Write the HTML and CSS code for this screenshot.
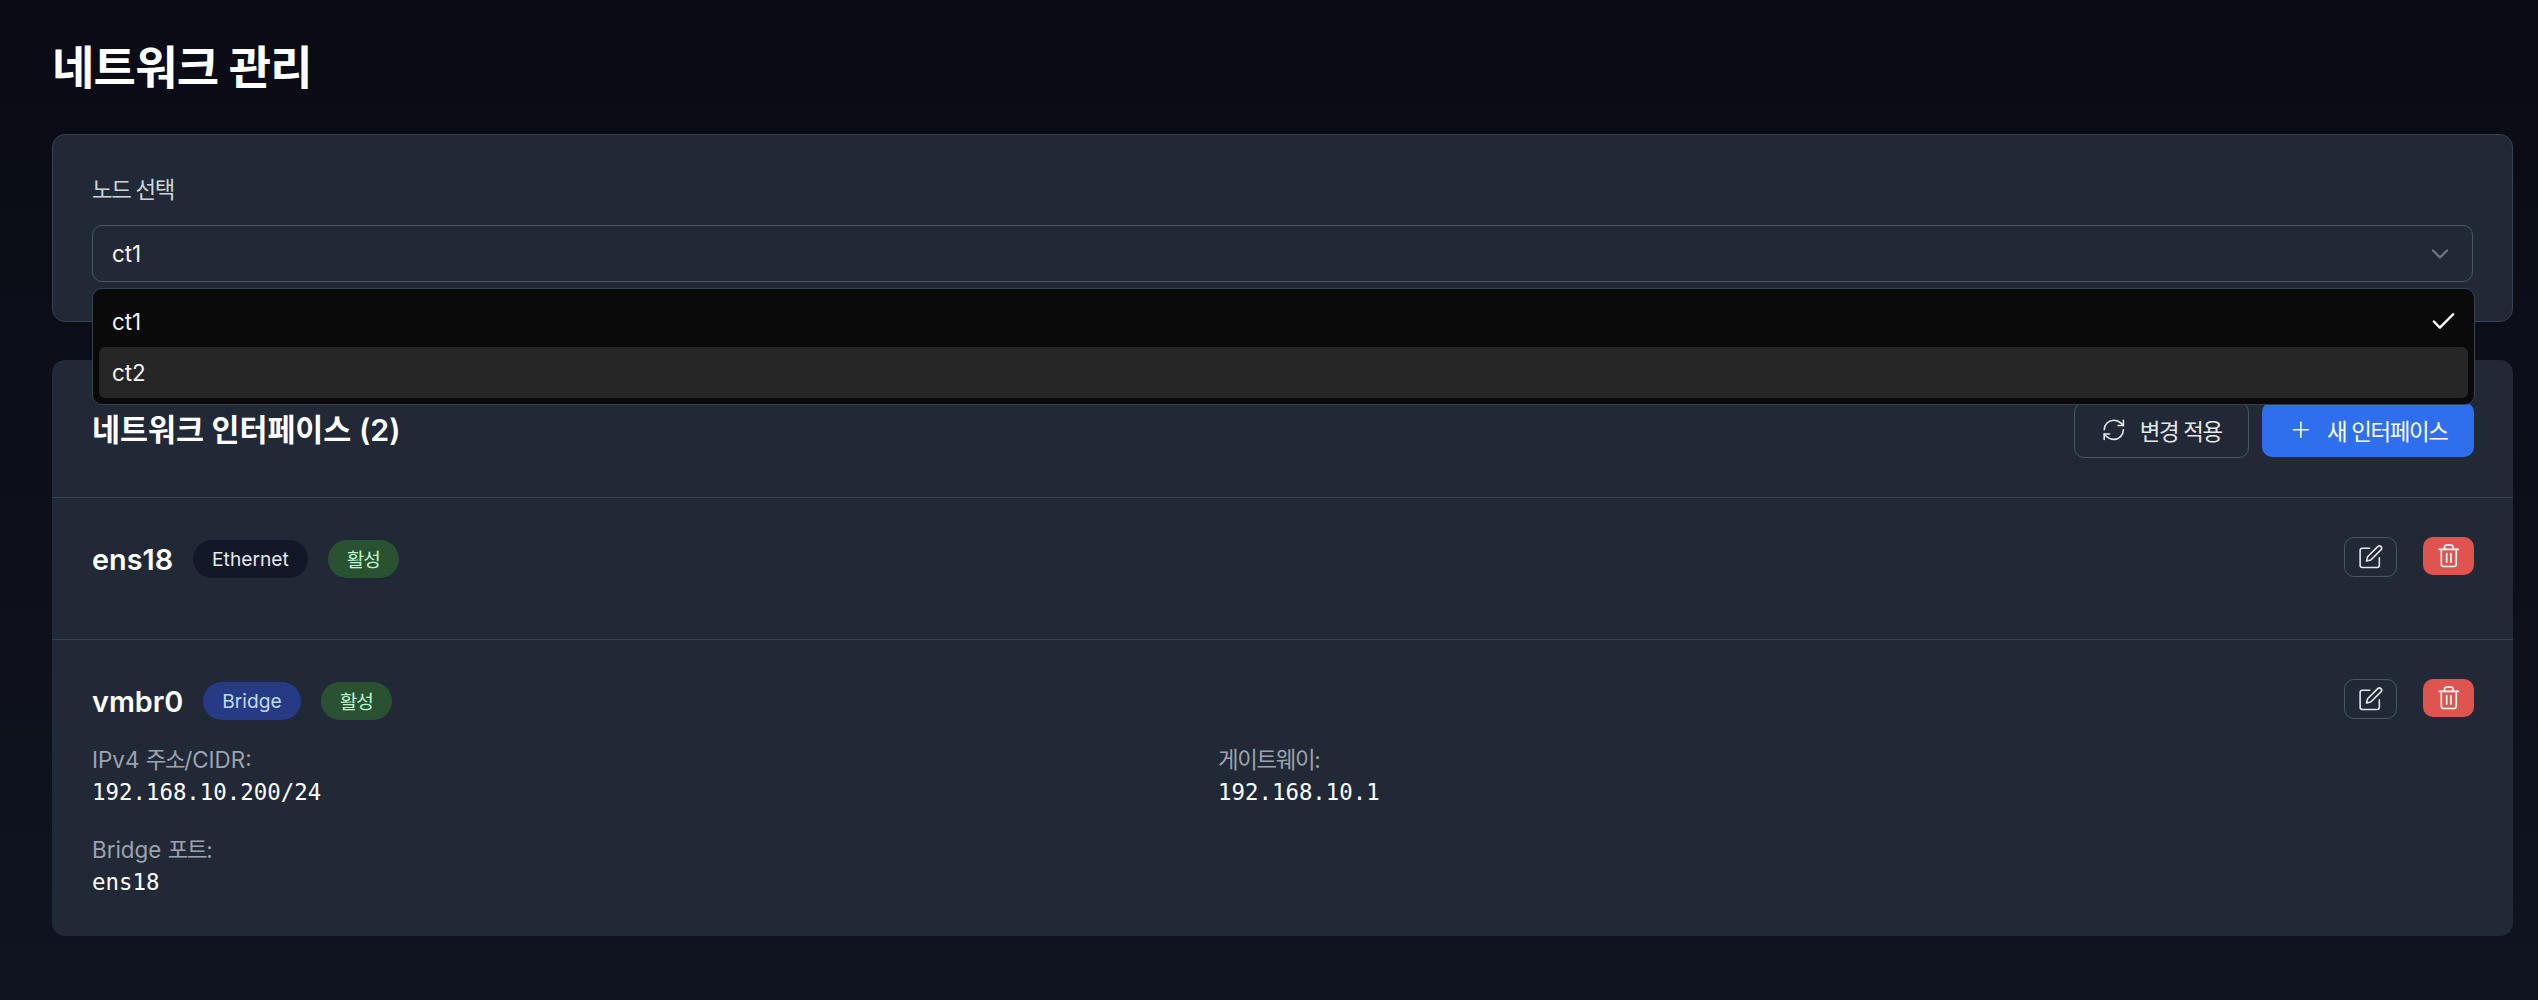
FILE: index.html
```html
<!DOCTYPE html>
<html lang="ko">
<head>
    <meta charset="UTF-8">
    <meta name="viewport" content="width=device-width, initial-scale=1.0">
    <title>네트워크 관리</title>
    <link rel="stylesheet" href="styles.css">
</head>
<body>
    <main class="page">
        <h1 class="page-title">네트워크 관리</h1>

        <section class="card node-card">
            <div class="field-label"><span class="ko">노드 선택</span></div>
            <div class="select-wrap">
                <div class="select-box">
                    <span>ct1</span>
                    <svg class="chevron" viewBox="0 0 24 24"><path d="m6 9 6 6 6-6"/></svg>
                </div>
                <!-- 열린 드롭다운 -->
                <div class="select-menu">
                    <div class="select-item selected">
                        <span>ct1</span>
                        <svg class="check" viewBox="0 0 24 24"><path d="M20 6 9 17l-5-5"/></svg>
                    </div>
                    <div class="select-item hover"><span>ct2</span></div>
                </div>
            </div>
        </section>

        <section class="card list-card">
            <div class="list-header">
                <h2>네트워크 인터페이스 (2)</h2>
                <div class="header-actions">
                    <button class="btn btn-outline">
                        <svg class="icon" viewBox="0 0 24 24"><path d="M3 12a9 9 0 0 1 9-9 9.75 9.75 0 0 1 6.74 2.74L21 8"/><path d="M21 3v5h-5"/><path d="M21 12a9 9 0 0 1-9 9 9.75 9.75 0 0 1-6.74-2.74L3 16"/><path d="M8 16H3v5"/></svg>
                        <span class="ko">변경 적용</span>
                    </button>
                    <button class="btn btn-primary">
                        <svg class="icon" viewBox="0 0 24 24"><path d="M5 12h14"/><path d="M12 5v14"/></svg>
                        <span class="ko">새 인터페이스</span>
                    </button>
                </div>
            </div>

            <div class="iface-row">
                <div class="iface-main">
                    <div class="iface-title">
                        <span class="iface-name">ens18</span>
                        <span class="pill pill-dark">Ethernet</span>
                        <span class="pill pill-green"><span class="ko">활성</span></span>
                    </div>
                </div>
                <div class="iface-actions">
                    <button class="icon-btn icon-btn-outline">
                        <svg class="icon" viewBox="0 0 24 24"><path d="M11 4H4a2 2 0 0 0-2 2v14a2 2 0 0 0 2 2h14a2 2 0 0 0 2-2v-7"/><path d="M18.5 2.5a2.121 2.121 0 0 1 3 3L12 15l-4 1 1-4 9.5-9.5z"/></svg>
                    </button>
                    <button class="icon-btn icon-btn-red">
                        <svg class="icon" viewBox="0 0 24 24"><path d="M3 6h18"/><path d="M19 6v14a2 2 0 0 1-2 2H7a2 2 0 0 1-2-2V6"/><path d="M8 6V4a2 2 0 0 1 2-2h4a2 2 0 0 1 2 2v2"/><path d="M10 10v8"/><path d="M14 10v8"/></svg>
                    </button>
                </div>
            </div>

            <div class="iface-row">
                <div class="iface-main">
                    <div class="iface-title">
                        <span class="iface-name">vmbr0</span>
                        <span class="pill pill-blue">Bridge</span>
                        <span class="pill pill-green"><span class="ko">활성</span></span>
                    </div>
                    <div class="iface-info">
                        <div>
                            <div class="info-label">IPv4 <span class="ko">주소</span>/CIDR:</div>
                            <div class="info-value">192.168.10.200/24</div>
                        </div>
                        <div>
                            <div class="info-label"><span class="ko">게이트웨이</span>:</div>
                            <div class="info-value">192.168.10.1</div>
                        </div>
                        <div>
                            <div class="info-label">Bridge <span class="ko">포트</span>:</div>
                            <div class="info-value">ens18</div>
                        </div>
                    </div>
                </div>
                <div class="iface-actions">
                    <button class="icon-btn icon-btn-outline">
                        <svg class="icon" viewBox="0 0 24 24"><path d="M11 4H4a2 2 0 0 0-2 2v14a2 2 0 0 0 2 2h14a2 2 0 0 0 2-2v-7"/><path d="M18.5 2.5a2.121 2.121 0 0 1 3 3L12 15l-4 1 1-4 9.5-9.5z"/></svg>
                    </button>
                    <button class="icon-btn icon-btn-red">
                        <svg class="icon" viewBox="0 0 24 24"><path d="M3 6h18"/><path d="M19 6v14a2 2 0 0 1-2 2H7a2 2 0 0 1-2-2V6"/><path d="M8 6V4a2 2 0 0 1 2-2h4a2 2 0 0 1 2 2v2"/><path d="M10 10v8"/><path d="M14 10v8"/></svg>
                    </button>
                </div>
            </div>
        </section>
    </main>
</body>
</html>
```

FILE: styles.css
```css
* {
    box-sizing: border-box;
}
html, body {
    margin: 0;
    padding: 0;
}
body {
    font-family: Inter, "Noto Sans CJK KR", sans-serif;
    background: linear-gradient(180deg, #0a0b14 0%, #0f1420 100%);
    height: 1000px;
    overflow: hidden;
    color: #fff;
}
.page {
    padding: 35px 25px 0 52px;
}
/* 한글 자간 */
.ko {
    letter-spacing: -0.06em;
}
.page-title {
    font-size: 46px;
    line-height: 64px;
    font-weight: 700;
    letter-spacing: -0.7px;
    margin: 0 0 35px;
    color: #fff;
}
.card {
    background: #212836;
    border-radius: 13px;
}
.node-card {
    border: 1px solid #374151;
    padding: 39px;
    height: 188px;
    margin-bottom: 38px;
}
.field-label {
    font-size: 22.4px;
    line-height: 32px;
    color: #d1d5db;
    margin-bottom: 19px;
}
.select-wrap {
    position: relative;
}
.select-box {
    height: 57px;
    border: 1px solid #4b5563;
    border-radius: 10px;
    padding: 0 18px 0 19px;
    display: flex;
    align-items: center;
    justify-content: space-between;
    font-size: 22.4px;
    color: #f3f4f6;
}
.chevron {
    width: 28px;
    height: 28px;
    fill: none;
    stroke: #6b7280;
    stroke-width: 2;
    stroke-linecap: round;
    stroke-linejoin: round;
}
.select-menu {
    position: absolute;
    top: 63px;
    left: 0;
    right: -2px;
    height: 117px;
    z-index: 10;
    background: #0a0a0a;
    border: 1px solid #374151;
    border-radius: 10px;
    padding: 6px;
}
.select-item {
    height: 51px;
    padding: 0 10px 0 13px;
    border-radius: 6px;
    display: flex;
    align-items: center;
    justify-content: space-between;
    font-size: 22.4px;
    color: #f3f4f6;
}
.select-item.selected {
    height: 52px;
}
.select-item.hover {
    background: #262626;
}
.check {
    width: 29px;
    height: 29px;
    fill: none;
    stroke: #fff;
    stroke-width: 2;
    stroke-linecap: round;
    stroke-linejoin: round;
}
.list-header {
    height: 138px;
    padding: 42px 39px 0 40px;
    display: flex;
    align-items: flex-start;
    justify-content: space-between;
    border-bottom: 1px solid #374151;
}
.list-header h2 {
    font-size: 30.4px;
    line-height: 56px;
    font-weight: 600;
    margin: 0;
    color: #fff;
}
.header-actions {
    display: flex;
    gap: 13px;
}
.btn {
    font-family: inherit;
    height: 56px;
    display: flex;
    align-items: center;
    justify-content: center;
    gap: 13px;
    font-size: 22.4px;
    font-weight: 400;
    border-radius: 10px;
    color: #e5e7eb;
    background: transparent;
    padding: 0;
}
.btn-outline {
    width: 175px;
    border: 1px solid #4b5563;
}
.btn-primary {
    width: 212px;
    height: 55px;
    border: 0;
    background: #2f6fed;
    color: #fff;
}
.icon {
    width: 25.6px;
    height: 25.6px;
    flex: none;
    fill: none;
    stroke: currentColor;
    stroke-width: 1.5;
    stroke-linecap: round;
    stroke-linejoin: round;
}
.iface-row {
    display: flex;
    gap: 26px;
    padding: 39px 39px 39px 40px;
}
.iface-row + .iface-row {
    border-top: 1px solid #374151;
    padding-bottom: 37px;
}
.iface-main {
    flex: 1;
    min-height: 63px;
}
.iface-title {
    display: flex;
    align-items: center;
    gap: 20px;
    height: 44px;
}
.iface-name {
    font-size: 28.8px;
    font-weight: 600;
    color: #fff;
}
.pill {
    height: 38px;
    padding: 0 19px;
    border-radius: 19px;
    display: flex;
    align-items: center;
    font-size: 19.2px;
    font-weight: 400;
}
.pill-dark {
    background: #111827;
    color: #e5e7eb;
}
.pill-green {
    background: #2a5232;
    color: #bbf7d0;
}
.pill-blue {
    background: #273a86;
    color: #bfdbfe;
}
.iface-info {
    display: grid;
    grid-template-columns: 1fr 1fr;
    gap: 24px 26px;
    margin-top: 20px;
}
.info-label {
    font-size: 22.4px;
    line-height: 33px;
    color: #9ca3af;
}
.info-value {
    font-family: "DejaVu Sans Mono", monospace;
    font-size: 22.4px;
    line-height: 33px;
    color: #fff;
}
.iface-actions {
    display: flex;
    align-items: flex-start;
    gap: 26px;
}
.icon-btn {
    display: flex;
    align-items: center;
    justify-content: center;
    padding: 0;
    border-radius: 10px;
    color: #e5e7eb;
}
.icon-btn-outline {
    width: 53px;
    height: 40px;
    background: transparent;
    border: 1px solid #4b5563;
}
.icon-btn-red {
    width: 51px;
    height: 38px;
    border: 0;
    background: #e0544f;
    color: #fff;
}
```
